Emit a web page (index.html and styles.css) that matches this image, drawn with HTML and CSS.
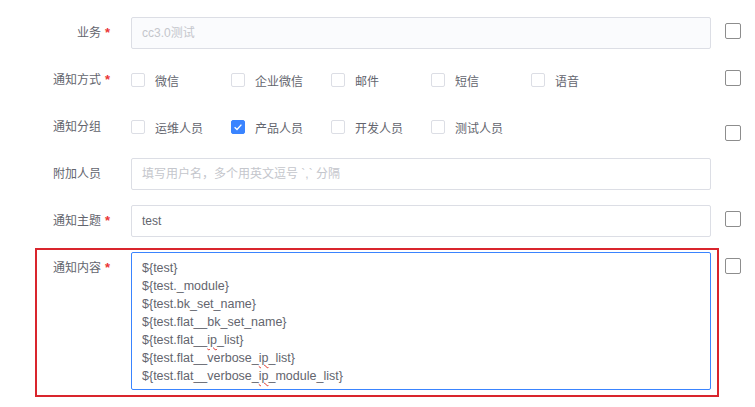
FILE: index.html
```html
<!DOCTYPE html>
<html lang="zh-CN">
<head>
    <meta charset="UTF-8">
    <meta name="viewport" content="width=device-width, initial-scale=1.0">
    <title>通知配置</title>
    <link rel="stylesheet" href="styles.css">
</head>
<body>
    <div class="notice-form">
        <div class="form-row">
            <div class="form-label"><span class="label-text">业务</span><span class="star">*</span></div>
            <div class="form-content">
                <div class="text-input is-disabled"><span class="placeholder">cc3.0测试</span></div>
            </div>
            <span class="side-check"></span>
        </div>

        <div class="form-row">
            <div class="form-label"><span class="label-text">通知方式</span><span class="star">*</span></div>
            <div class="form-content options">
                <label class="option"><span class="check-box"></span>微信</label>
                <label class="option"><span class="check-box"></span>企业微信</label>
                <label class="option"><span class="check-box"></span>邮件</label>
                <label class="option"><span class="check-box"></span>短信</label>
                <label class="option"><span class="check-box"></span>语音</label>
            </div>
            <span class="side-check"></span>
        </div>

        <div class="form-row">
            <div class="form-label"><span class="label-text">通知分组</span></div>
            <div class="form-content options">
                <label class="option"><span class="check-box"></span>运维人员</label>
                <label class="option"><span class="check-box is-checked">
                    <svg width="14" height="14" viewBox="0 0 14 14"><polyline points="3.6,7.2 6,9.4 10.4,4.6" fill="none" stroke="#fff" stroke-width="1.4"/></svg>
                </span>产品人员</label>
                <label class="option"><span class="check-box"></span>开发人员</label>
                <label class="option"><span class="check-box"></span>测试人员</label>
            </div>
            <span class="side-check side-check-low"></span>
        </div>

        <div class="form-row">
            <div class="form-label"><span class="label-text">附加人员</span></div>
            <div class="form-content">
                <div class="text-input"><span class="placeholder">填写用户名，多个用英文逗号 `,` 分隔</span></div>
            </div>
        </div>

        <div class="form-row">
            <div class="form-label"><span class="label-text">通知主题</span><span class="star">*</span></div>
            <div class="form-content">
                <div class="text-input">test</div>
            </div>
            <span class="side-check"></span>
        </div>

        <div class="form-row">
            <div class="form-label"><span class="label-text">通知内容</span><span class="star">*</span></div>
            <div class="form-content">
                <div class="text-area">
                    <div>${test}</div>
                    <div>${test._module}</div>
                    <div>${test.bk_set_name}</div>
                    <div>${test.flat__bk_set_name}</div>
                    <div>${test.flat__<span class="typo">ip</span>_list}</div>
                    <div>${test.flat__verbose_<span class="typo">ip</span>_list}</div>
                    <div>${test.flat__verbose_<span class="typo">ip</span>_module_list}</div>
                </div>
            </div>
            <span class="side-check"></span>
        </div>

        <div class="highlight"></div>
    </div>
</body>
</html>
```

FILE: styles.css
```css
body {
    margin: 0;
    background: #fff;
    font-family: "Liberation Sans", "Noto Sans CJK SC", sans-serif;
    font-size: 12px;
    color: #63656e;
}

.notice-form {
    position: relative;
    padding-top: 17px;
}

.form-row {
    display: flex;
    align-items: flex-start;
    margin-bottom: 15px;
}

.form-label {
    display: flex;
    width: 131px;
    flex-shrink: 0;
    line-height: 32px;
}

.label-text {
    width: 101px;
    text-align: right;
}

.star {
    color: #ea3636;
    margin-left: 4px;
    font-size: 13px;
    font-weight: bold;
}

.form-content {
    width: 580px;
    flex-shrink: 0;
}

.text-input {
    box-sizing: border-box;
    height: 32px;
    line-height: 30px;
    padding: 0 10px;
    border: 1px solid #dcdee5;
    border-radius: 2px;
    background: #fff;
}

.text-input.is-disabled {
    background: #fafbfd;
}

.placeholder {
    color: #c4c6cc;
}

.options {
    display: flex;
    height: 32px;
}

.option {
    display: flex;
    align-items: center;
    width: 100px;
}

.check-box {
    box-sizing: border-box;
    width: 14px;
    height: 14px;
    margin-right: 10px;
    border: 1px solid #dcdee5;
    border-radius: 2px;
    background: #fff;
}

.check-box.is-checked {
    border-color: #3a84ff;
    background: #3a84ff;
}

.check-box svg {
    display: block;
    margin: -1px 0 0 -1px;
}

.side-check {
    box-sizing: border-box;
    width: 16px;
    height: 16px;
    margin: 6px 0 0 14px;
    border: 1px solid #8d8d8d;
    border-radius: 2px;
}

.side-check-low {
    margin-top: 14px;
}

.text-area {
    box-sizing: border-box;
    height: 138px;
    padding: 6px 10px;
    font-size: 12.5px;
    line-height: 18px;
    border: 1px solid #3a84ff;
    border-radius: 2px;
}

.typo {
    text-decoration: underline wavy #e0382f;
    text-decoration-thickness: 1px;
    text-underline-offset: 2px;
}

.highlight {
    position: absolute;
    left: 35px;
    top: 248px;
    width: 684px;
    height: 149px;
    box-sizing: border-box;
    border: 2px solid #d9252d;
    pointer-events: none;
}
```
